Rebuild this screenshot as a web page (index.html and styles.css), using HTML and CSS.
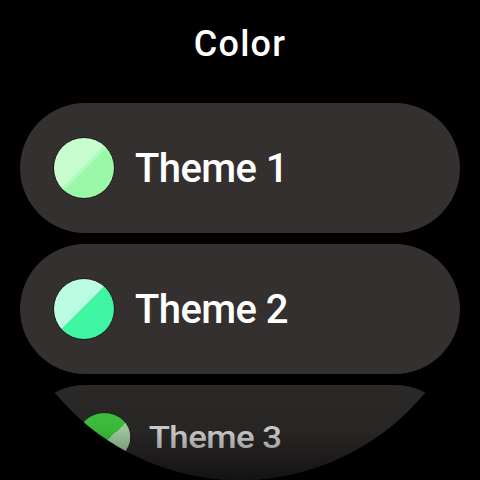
FILE: index.html
```html
<!DOCTYPE html>
<html>
<head>
<meta charset="utf-8">
<link rel="stylesheet" href="styles.css">
</head>
<body>
<div class="screen">
  <h1 class="title">Color</h1>
  <div class="list">
    <div class="chip">
      <div class="row">
        <span class="swatch swatch-1"></span>
        <span class="label">Theme 1</span>
      </div>
    </div>
    <div class="chip">
      <div class="row">
        <span class="swatch swatch-2"></span>
        <span class="label">Theme 2</span>
      </div>
    </div>
    <div class="chip chip-edge">
      <div class="row row-edge">
        <span class="swatch swatch-3"></span>
        <span class="label label-edge">Theme 3</span>
      </div>
    </div>
  </div>
  <div class="fade"></div>
</div>
</body>
</html>
```
FILE: styles.css
```css
html, body {
  margin: 0;
  padding: 0;
  background: #000;
}
.screen {
  position: relative;
  width: 480px;
  height: 480px;
  border-radius: 50%;
  overflow: hidden;
  background: #000;
  font-family: Roboto, "Noto Sans", sans-serif;
}
.title {
  margin: 0;
  padding-top: 24px;
  height: 40px;
  line-height: 40px;
  font-size: 36px;
  font-weight: 500;
  color: #fff;
  text-align: center;
  letter-spacing: 1.2px;
}
.list {
  display: flex;
  flex-direction: column;
  gap: 11px;
  padding: 39px 20px 0;
}
.chip {
  height: 130px;
  border-radius: 65px;
  background: #33302f;
  flex-shrink: 0;
}
.row {
  height: 100%;
  display: flex;
  align-items: center;
  gap: 20px;
  padding-left: 33px;
  box-sizing: border-box;
}
.swatch {
  width: 62px;
  height: 62px;
  border-radius: 50%;
  box-sizing: border-box;
  border: 1.5px solid #1e1c1c;
  flex-shrink: 0;
}
.swatch-1 {
  background: linear-gradient(135deg, #c8fdd0 0 48%, #b0fbbb 48% 52%, #9af8a6 52% 100%);
}
.swatch-2 {
  background: linear-gradient(135deg, #bbfce2 0 48%, #40f5a2 48% 100%);
}
.swatch-3 {
  background: linear-gradient(135deg, #3fc73f 0 56%, #a9d6a8 56% 100%);
}
.label {
  font-size: 40px;
  font-weight: 500;
  color: #fff;
  letter-spacing: -0.6px;
}
.chip-edge {
  background: #2b2928;
}
.row-edge {
  transform: scale(0.87, 0.8);
  transform-origin: 220px 0;
}
.label-edge {
  color: #d8d8d8;
}
.fade {
  position: absolute;
  left: 0;
  right: 0;
  bottom: 0;
  height: 100px;
  background: linear-gradient(to bottom, rgba(0,0,0,0) 0%, rgba(0,0,0,0.08) 50%, rgba(0,0,0,0.55) 100%);
  pointer-events: none;
}
```
